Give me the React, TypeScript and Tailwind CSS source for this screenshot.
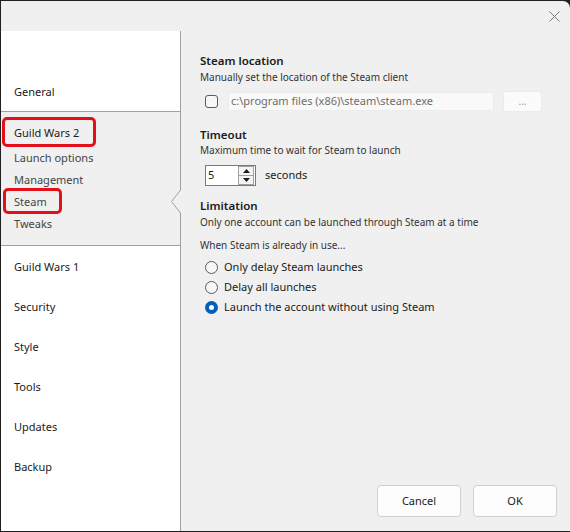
import React, { useState } from 'react';

const font = { fontFamily: '"Noto Sans", "Open Sans", sans-serif' };

const mainItems = ['Guild Wars 1', 'Security', 'Style', 'Tools', 'Updates', 'Backup'];
const gw2Items = ['Launch options', 'Management', 'Steam', 'Tweaks'];
const options = ['Only delay Steam launches', 'Delay all launches', 'Launch the account without using Steam'];

const Notch = () => (
  <svg className="absolute right-[-1px] top-[-1px]" width="11" height="24" viewBox="0 0 11 24">
    <polygon points="11,0 1.5,11.5 11,23" fill="#f0f0f0" />
    <polyline points="10.5,0 1.5,11.5 10.5,23" fill="none" stroke="#a0a0a0" strokeWidth="1" />
  </svg>
);

const Radio = ({ checked }: { checked: boolean }) =>
  checked ? (
    <span className="w-[13px] h-[13px] rounded-full bg-[#005fb8] flex items-center justify-center">
      <span className="w-[5px] h-[5px] rounded-full bg-white" />
    </span>
  ) : (
    <span className="w-[13px] h-[13px] rounded-full border border-[#5a5a5a] bg-[#f7f7f7]" />
  );

export default function App() {
  const [choice, setChoice] = useState(2);

  return (
    <div className="w-[570px] h-[532px] bg-[#202020] pl-px pt-px pb-px overflow-hidden" style={font}>
      <div className="w-full h-full bg-[#f0f0f0] rounded-tr-[7px] flex flex-col text-[#1a1a1a]">
        {/* title bar */}
        <div className="h-[30px] flex justify-end items-center pr-[10px]">
          <svg width="11" height="11" viewBox="0 0 11 11">
            <path d="M0.5 0.5 L10.5 10.5 M10.5 0.5 L0.5 10.5" stroke="#7a7a7a" strokeWidth="1" />
          </svg>
        </div>

        <div className="flex-1 flex min-h-0">
          {/* sidebar */}
          <div className="w-[180px] bg-white border-r border-[#a0a0a0] flex flex-col text-[11px]">
            <div className="h-[80px] pt-[40px]">
              <div className="h-10 flex items-center pl-[13px] pt-[3px]">General</div>
            </div>
            <div className="bg-[#f0f0f0] border-y border-[#a0a0a0] pt-[5px] pb-[10px]">
              <div className="relative h-[30px] flex items-center pl-[13px] pt-[2px]">
                Guild Wars 2
                <span className="absolute left-[1px] top-0 w-[94px] h-[30px] border-[3px] border-[#e3101a] rounded-[5px]" />
              </div>
              {gw2Items.map(item => (
                <div key={item} className="relative h-[22px] flex items-center pl-[13px] text-[#444]">
                  {item}
                  {item === 'Steam' && (
                    <>
                      <span className="absolute left-[2px] top-[-3px] w-[59px] h-[26px] border-[3px] border-[#e3101a] rounded-[5px]" />
                      <Notch />
                    </>
                  )}
                </div>
              ))}
            </div>
            {mainItems.map(item => (
              <div key={item} className="h-10 flex items-center pl-[13px] pt-[2px]">{item}</div>
            ))}
          </div>

          {/* content */}
          <div className="flex-1 flex flex-col pl-[19px]">
            <div className="flex-1 pt-[22px]">
              <div className="text-[11.5px] font-semibold leading-[16px]">Steam location</div>
              <div className="pt-px text-[10px] leading-[15px] text-[#333]">Manually set the location of the Steam client</div>
              <div className="mt-[6px] h-[21px] flex items-center">
                <span className="ml-[5px] w-[13px] h-[13px] border border-[#5a5a5a] rounded-[3px] bg-[#f7f7f7]" />
                <div className="ml-[10px] w-[266px] h-[19px] bg-[#f9f9f9] border border-[#ececec] flex items-center pl-[2px] text-[11px] text-[#6d6d6d]">
                  c:\program files (x86)\steam\steam.exe
                </div>
                <div className="ml-[9px] w-[39px] h-[21px] bg-[#fbfbfb] border border-[#ebebeb] rounded-[3px] flex items-center justify-center text-[10px] text-[#9a9a9a]">
                  ...
                </div>
              </div>

              <div className="mt-[15px] text-[11.5px] font-semibold leading-[16px]">Timeout</div>
              <div className="text-[10px] leading-[15px] text-[#333]">Maximum time to wait for Steam to launch</div>
              <div className="mt-[7px] h-[21px] flex items-center">
                <div className="ml-[5px] w-[51px] h-[21px] bg-white border border-[#7a7a7a] flex items-center">
                  <span className="flex-1 pl-[2px] text-[11px]">5</span>
                  <div className="w-[16px] h-[19px] flex flex-col mr-px">
                    <div className="h-[10px] border border-[#a0a0a0] bg-[#f4f4f4] flex items-center justify-center">
                      <svg width="7" height="4" viewBox="0 0 7 4"><polygon points="3.5,0 7,4 0,4" fill="#1a1a1a" /></svg>
                    </div>
                    <div className="h-[9px] border border-t-0 border-[#a0a0a0] bg-[#f4f4f4] flex items-center justify-center">
                      <svg width="7" height="4" viewBox="0 0 7 4"><polygon points="0,0 7,0 3.5,4" fill="#1a1a1a" /></svg>
                    </div>
                  </div>
                </div>
                <span className="ml-[9px] text-[11px]">seconds</span>
              </div>

              <div className="mt-[12px] text-[11.5px] font-semibold leading-[16px]">Limitation</div>
              <div className="pt-px text-[10px] leading-[15px] text-[#333]">Only one account can be launched through Steam at a time</div>
              <div className="mt-[7px] pt-px text-[10px] leading-[15px] text-[#333]">When Steam is already in use...</div>
              <div className="mt-[4px] flex flex-col">
                {options.map((opt, i) => (
                  <label key={opt} className="h-[20px] flex items-center gap-[6px] pl-[5px] text-[11px]" onClick={() => setChoice(i)}>
                    <Radio checked={choice === i} />
                    <span className="pt-px">{opt}</span>
                  </label>
                ))}
              </div>
            </div>

            <div className="flex justify-end gap-[12px] pr-[13px] pb-[14px]">
              <button className="w-[84px] h-[32px] bg-[#fdfdfd] border border-[#d0d0d0] rounded-[4px] text-[11px]">Cancel</button>
              <button className="w-[84px] h-[32px] bg-[#fdfdfd] border border-[#d0d0d0] rounded-[4px] text-[11px]">OK</button>
            </div>
          </div>
        </div>
      </div>
    </div>
  );
}
